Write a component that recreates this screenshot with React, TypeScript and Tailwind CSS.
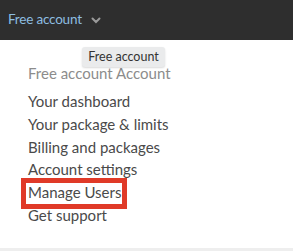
const items = [
  "Your dashboard",
  "Your package & limits",
  "Billing and packages",
  "Account settings",
  "Manage Users",
  "Get support",
];

export default function App() {
  return (
    <div
      className="relative w-[293px] h-[251px] bg-white overflow-hidden"
      style={{ fontFamily: "Lato, 'Open Sans', sans-serif" }}
    >
      <div className="h-[40px] bg-[#2e2e2e] flex items-center pl-[8px]">
        <span className="text-[13.5px] tracking-[-0.2px] text-[#8dbde0] leading-none">Free account</span>
        <svg className="ml-[9px] mt-[1px]" width="10" height="7" viewBox="0 0 10 7">
          <path d="M1.5 1.5 L5 5 L8.5 1.5" stroke="#9a9a9a" strokeWidth="2" fill="none" strokeLinecap="round" />
        </svg>
      </div>

      <div className="absolute left-[82px] top-[47px] h-[20px] w-[83px] flex items-center justify-center rounded-[3px] bg-[#eaebec] shadow-[0_1px_2px_rgba(0,0,0,0.15)] text-[12.5px] text-[#333]">
        Free account
      </div>

      <div className="pl-[28px] pt-[22px]">
        <div className="text-[15px] leading-[23px] text-[#8c8c8c] mb-[5px]">Free account Account</div>
        {items.map((item) => (
          <div key={item} className="text-[15px] leading-[22.8px] text-[#4a4a4a]">
            {item === "Manage Users" ? (
              <span className="relative">
                {item}
                <span className="absolute -left-[7px] w-[106px] -top-[5px] -bottom-[8px] border-[5px] border-[#e03a28]" />
              </span>
            ) : (
              item
            )}
          </div>
        ))}
      </div>

      <div className="absolute left-0 right-0 bottom-0 h-[3px] bg-[#eeeeee]" />
    </div>
  );
}
